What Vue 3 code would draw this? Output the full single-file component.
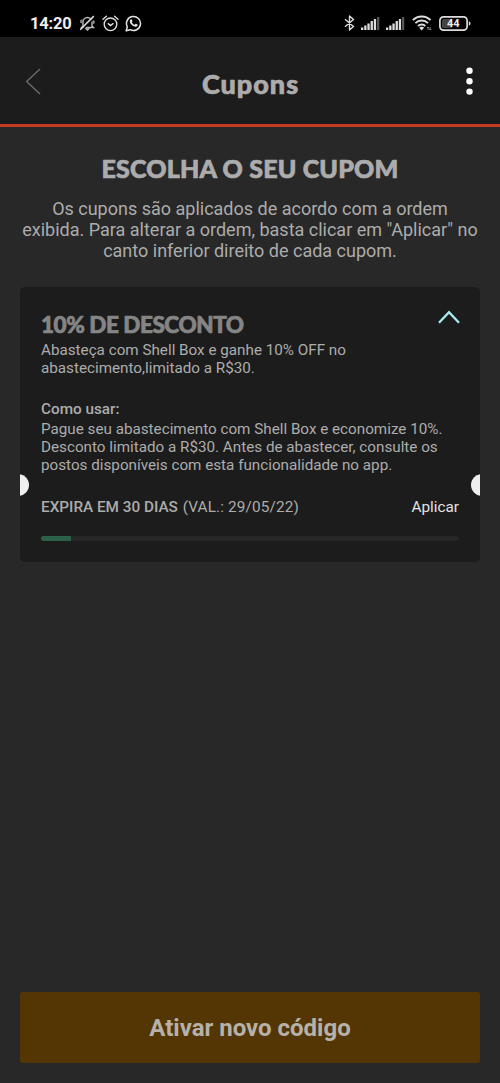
<script setup>
const coupon = {
  title: '10% DE DESCONTO',
  summary: ['Abasteça com Shell Box e ganhe 10% OFF no', 'abastecimento,limitado a R$30.'],
  usage: [
    'Pague seu abastecimento com Shell Box e economize 10%.',
    'Desconto limitado a R$30. Antes de abastecer, consulte os',
    'postos disponíveis com esta funcionalidade no app.'
  ],
  progress: 7.1
}
const signalBars = [2.5, 4.5, 6.5, 9, 11, 13]
</script>

<template>
  <main class="screen">
    <div class="status">
      <div class="status-left">
        <span class="time">14:20</span>
        <svg class="bell" width="17" height="17" viewBox="0 0 17 17" fill="none">
          <path d="M4 11V7a4.5 4.5 0 0 1 9 0v4l1.5 1.5h-12Z" stroke="#bbb" stroke-width="1.4" />
          <path d="M.8 5.8 3.4 4v4.5L1.5 8ZM13.5 4.8l2.5 1.4-.6 2.6-1.9.5Z" fill="#888" />
          <path d="M5.3 13.2h6.2l-3 2.9Z" fill="#bbb" />
          <path d="m2.6 15.5 13-13" stroke="#000" stroke-width="1.5" />
          <path d="m1.2 14.7 13.6-13.6" stroke="#ddd" stroke-width="1.5" />
        </svg>
        <svg class="alarm" width="17" height="17" viewBox="0 0 17 17" fill="none" stroke="#ddd" stroke-width="1.4" stroke-linecap="round">
          <circle cx="8.5" cy="9.3" r="6.3" />
          <path d="m1 4.2 3.4-3M16 4.2l-3.4-3M6.2 8.6l2.3 2 2.5-2" />
        </svg>
        <svg class="whats" width="17" height="17" viewBox="0 0 17 17">
          <path d="m1.2 15.8 1.1-4A7 7 0 1 1 5.2 14.7Z" fill="none" stroke="#e4e4e4" stroke-width="1.5" stroke-linejoin="round" />
          <path d="M5.5 4.6c.6-.6 1.1-.5 1.4.1l.6 1.4c.1.3-.3.8-.6 1.1.6 1.3 1.6 2.1 2.8 2.6l.9-1c.3-.3 2 .6 2.1.9.1 1.3-1.1 2.1-2.2 2-2.8-.4-5.6-3.2-5.7-5.3 0-.7.3-1.4.7-1.8Z" fill="#e4e4e4" />
        </svg>
      </div>
      <div class="status-right">
        <svg class="bt" width="11" height="16" viewBox="0 0 11 16" fill="none" stroke="#ddd" stroke-width="1.4" stroke-linejoin="round">
          <path d="m1 4.2 8.5 7.3-4 3.6V.9l4 3.6L1 11.8" />
        </svg>
        <svg v-for="n in 2" :key="n" class="signal" width="19" height="13" viewBox="0 0 19 13">
          <rect v-for="(h, i) in signalBars" :key="i" :x="i * 3.2" :y="13 - h" width="2.3" :height="h" :fill="i === 5 ? '#555' : '#ddd'" />
        </svg>
        <svg class="wifi" width="20" height="16" viewBox="0 0 20 16" fill="none" stroke="#ddd" stroke-width="1.9">
          <path d="M.8 5.2a12.6 12.6 0 0 1 17.8 0M3.4 8.1a9 9 0 0 1 12.6 0M6.1 11a5 5 0 0 1 7.2 0" />
          <path d="m7.1 12.6 2.6 2.9 2.5-2.9q-2.5-1.9-5.1 0Z" fill="#ddd" stroke="none" />
          <path d="M16.1 12v3m-1-2 1-1 1 1M18.2 12v3m-1-1 1 1 1-1" stroke="#999" stroke-width=".8" />
        </svg>
        <svg class="battery" width="32" height="15" viewBox="0 0 32 15">
          <rect x=".9" y=".9" width="27.2" height="13.2" rx="3.6" fill="none" stroke="#ddd" stroke-width="1.7" />
          <rect x="3" y="3" width="10" height="9" rx="1.5" fill="#444" />
          <path d="M29.8 5.3q1.7.4 1.7 2.2t-1.7 2.2Z" fill="#ddd" />
          <text x="14.2" y="11.4" text-anchor="middle" class="battery-text">44</text>
        </svg>
      </div>
    </div>

    <header class="bar">
      <svg class="back" width="16" height="27" viewBox="0 0 16 27" fill="none" stroke="#686868" stroke-width="1.5">
        <path d="M15 1 1.7 13.5 15 26" />
      </svg>
      <h1>Cupons</h1>
      <svg class="more" width="7" height="28" viewBox="0 0 7 28" fill="#fff">
        <circle cx="3.5" cy="3.8" r="3.2" /><circle cx="3.5" cy="14.3" r="3.2" /><circle cx="3.5" cy="24.6" r="3.2" />
      </svg>
    </header>

    <section class="intro">
      <h2>ESCOLHA O SEU CUPOM</h2>
      <p>Os cupons são aplicados de acordo com a ordem<br>exibida. Para alterar a ordem, basta clicar em "Aplicar" no<br>canto inferior direito de cada cupom.</p>
    </section>

    <article class="card">
      <div class="card-head">
        <h3>{{ coupon.title }}</h3>
        <svg width="22" height="14" viewBox="0 0 22 14" fill="none" stroke="#a9eaf5" stroke-width="2.3">
          <path d="M1 12.7 11 2.2l10 10.5" />
        </svg>
      </div>
      <p class="copy summary"><span v-for="l in coupon.summary" :key="l">{{ l }}</span></p>
      <h4>Como usar:</h4>
      <p class="copy usage"><span v-for="l in coupon.usage" :key="l">{{ l }}</span></p>
      <div class="card-foot">
        <span class="expiry"><b>EXPIRA EM 30 DIAS</b> <span class="date">(VAL.: 29/05/22)</span></span>
        <a class="apply">Aplicar</a>
      </div>
      <div class="track"><div class="fill" :style="{ width: coupon.progress + '%' }"></div></div>
      <i class="notch left"></i>
      <i class="notch right"></i>
    </article>

    <button class="activate">Ativar novo código</button>
  </main>
</template>

<style>
body { margin: 0; background: #282828; }
</style>

<style scoped>
.screen { box-sizing: border-box; display: flex; flex-direction: column; width: 500px; height: 1083px; background: #282828; color: #acacac; font-family: Roboto, sans-serif; overflow: hidden; }
h1, h2, h3, h4, p { margin: 0; white-space: nowrap; }
.status { box-sizing: border-box; flex: none; display: flex; justify-content: space-between; height: 37px; padding: 8px 30px 0; background: #000; }
.status-left, .status-right { display: flex; align-items: center; height: 30px; }
.time { font-size: 16.5px; font-weight: 700; color: #eee; width: 41px; letter-spacing: -.2px; }
.bell { margin-left: 8px; }
.alarm { margin-left: 6px; }
.whats { margin-left: 6px; }
.signal { margin-left: 6px; }
.wifi { margin-left: 7px; }
.battery { margin-left: 7px; margin-right: -1px; }
.battery-text { font: 700 11px Roboto, sans-serif; fill: #eee; }
.bar { box-sizing: border-box; flex: none; display: grid; grid-template-columns: 1fr auto 1fr; align-items: center; height: 90px; padding: 0 27px 0 25px; background: #1c1c1c; border-bottom: 3px solid #c43a22; }
.back { margin-top: 1px; }
.more { justify-self: end; }
h1, h2, h3 { font-family: Lato, sans-serif; font-weight: 900; -webkit-text-stroke: .7px currentColor; }
h1 { font-size: 27px; line-height: 32px; letter-spacing: 1px; padding: 6px 0 0 3px; }
.intro { text-align: center; padding-top: 26px; }
h2 { font-size: 25px; line-height: 30px; letter-spacing: .2px; }
.intro p { font-size: 18px; line-height: 21.3px; margin-top: 14.6px; }
.card { position: relative; box-sizing: border-box; height: 274.5px; margin: 26px 20px 0; padding: 23px 21px 0; background: #1c1c1c; border-radius: 5px; overflow: hidden; }
.card-head { display: flex; justify-content: space-between; height: 30.4px; }
.card-head svg { margin-right: -1px; }
h3 { font-size: 22.5px; line-height: 30px; letter-spacing: -.45px; color: #858585; }
.copy { font-size: 15.22px; line-height: 18.1px; }
.copy span { display: block; }
h4 { font-size: 15.3px; line-height: 18px; font-weight: 500; margin-top: 22.8px; }
.usage { margin-top: 2px; }
.card-foot { display: flex; justify-content: space-between; margin-top: 23.6px; font-size: 15.3px; line-height: 18px; }
.expiry b { font-weight: 500; }
.date { letter-spacing: .16px; margin-left: 1px; }
.apply { color: #e2e2e2; }
.track { height: 5px; margin-top: 20.4px; border-radius: 3px; background: #272727; overflow: hidden; }
.fill { height: 5px; background: #2c6049; }
.notch { position: absolute; top: 187px; width: 22px; height: 22px; border-radius: 50%; background: #efefef; }
.left { left: -13px; }
.right { right: -13px; }
.activate { height: 71px; margin: auto 20px 20.5px; padding: 1px 0 0; border: 0; border-radius: 3px; background: #533603; color: #b6b1aa; font: 700 24px Roboto, sans-serif; }
</style>
